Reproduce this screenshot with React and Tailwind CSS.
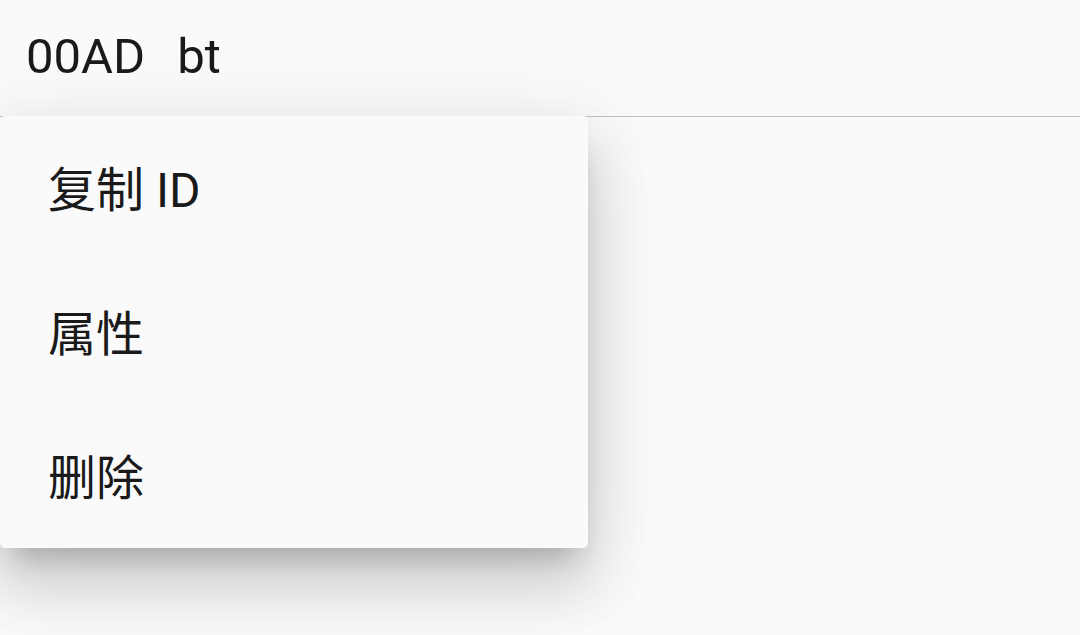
export default function App() {
  const items = ["复制 ID", "属性", "删除"];
  return (
    <div
      className="relative w-[1080px] h-[635px] overflow-hidden bg-[#fafafa] text-[#1a1a1a]"
      style={{ fontFamily: 'Roboto, "Noto Sans CJK SC", sans-serif' }}
    >
      <div className="h-[117px] border-b border-[#c4c4c4] flex items-center pl-[26px] pb-[3px] text-[49px] leading-none gap-[32px]">
        <span>00AD</span>
        <span>bt</span>
      </div>
      <div className="absolute left-0 top-[116px] w-[588px] rounded-[5px] bg-[#fafafa] shadow-[0_20px_26px_-12px_rgba(0,0,0,0.2),0_40px_60px_5px_rgba(0,0,0,0.12),0_15px_75px_12px_rgba(0,0,0,0.08)]">
        {items.map((t) => (
          <div key={t} className="h-[144px] flex items-center pl-[48px] pt-[5px] text-[48px] leading-none">
            {t}
          </div>
        ))}
      </div>
    </div>
  );
}
